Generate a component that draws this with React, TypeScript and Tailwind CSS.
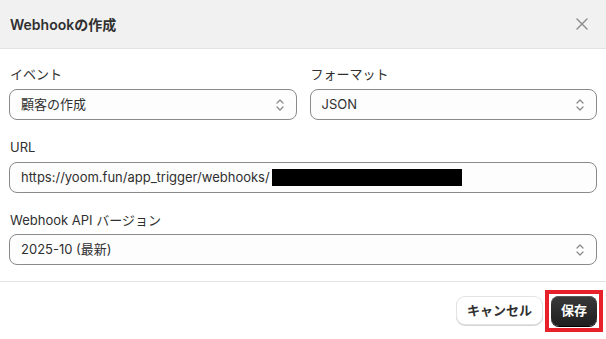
import React from "react";

const font = { fontFamily: '"Inter", "Noto Sans CJK JP", sans-serif' };

function Chevron() {
  return (
    <svg width="10" height="14" viewBox="0 0 10 14" fill="none" stroke="#8a8a8a" strokeWidth="1.3" strokeLinecap="round" strokeLinejoin="round">
      <path d="M2 5 L5 2 L8 5" />
      <path d="M2 9 L5 12 L8 9" />
    </svg>
  );
}

function Select({ value }: { value: string }) {
  return (
    <div className="flex h-[31px] items-center justify-between rounded-[8px] border border-[#8a8a8a] bg-[#fdfdfd] pl-[11px] pr-[11px] text-[13px] text-[#303030]">
      <span>{value}</span>
      <Chevron />
    </div>
  );
}

export default function App() {
  return (
    <div className="h-[339px] w-[606px] overflow-hidden bg-white" style={font}>
      <div className="flex h-[49px] items-center justify-between border-b border-[#e3e3e3] bg-[#f1f1f1] pl-[10px] pr-[18px]">
        <span className="text-[14px] font-semibold text-[#303030]">Webhookの作成</span>
        <svg width="12" height="12" viewBox="0 0 12 12" stroke="#8a8a8a" strokeWidth="1.4" strokeLinecap="round">
          <path d="M1 1 L11 11 M11 1 L1 11" />
        </svg>
      </div>
      <div className="flex flex-col gap-[17px] px-[9px] pt-[15px] pb-[16px]">
        <div className="grid grid-cols-2 gap-[13px]">
          <div className="flex flex-col gap-[5px]">
            <span className="text-[13px] leading-[20px] text-[#303030] pl-[1px]">イベント</span>
            <Select value="顧客の作成" />
          </div>
          <div className="flex flex-col gap-[5px]">
            <span className="text-[13px] leading-[20px] text-[#303030] pl-[1px]">フォーマット</span>
            <Select value="JSON" />
          </div>
        </div>
        <div className="flex flex-col gap-[5px]">
          <span className="text-[13px] leading-[20px] text-[#303030] pl-[1px]">URL</span>
          <div className="flex h-[31px] items-center rounded-[8px] border border-[#8a8a8a] bg-[#fdfdfd] pl-[11px] text-[13px] text-[#303030]">
            <span>https://yoom.fun/app_trigger/webhooks/</span>
            <div className="ml-[2px] h-[17px] w-[190px] bg-black" />
          </div>
        </div>
        <div className="flex flex-col gap-[4px]">
          <span className="text-[13px] leading-[20px] text-[#303030] pl-[1px]">Webhook API バージョン</span>
          <Select value="2025-10 (最新)" />
        </div>
      </div>
      <div className="flex h-[58px] items-center justify-end gap-[3px] border-t border-[#e3e3e3] pr-[3px]">
        <button className="h-[27px] rounded-[8px] bg-white px-[10px] text-[13px] font-semibold text-[#303030] shadow-[0_0_0_1px_#e3e3e3,0_1px_0_1px_#d4d4d4]">
          キャンセル
        </button>
        <div className="border-[4px] border-[#e8202a] p-[2px]">
          <button className="h-[30px] rounded-[8px] bg-gradient-to-b from-[#3a3a3a] to-[#1f1f1f] px-[10px] text-[13px] font-semibold text-white shadow-[inset_0_1px_0_#5a5a5a,0_1px_0_#000]">
            保存
          </button>
        </div>
      </div>
    </div>
  );
}
